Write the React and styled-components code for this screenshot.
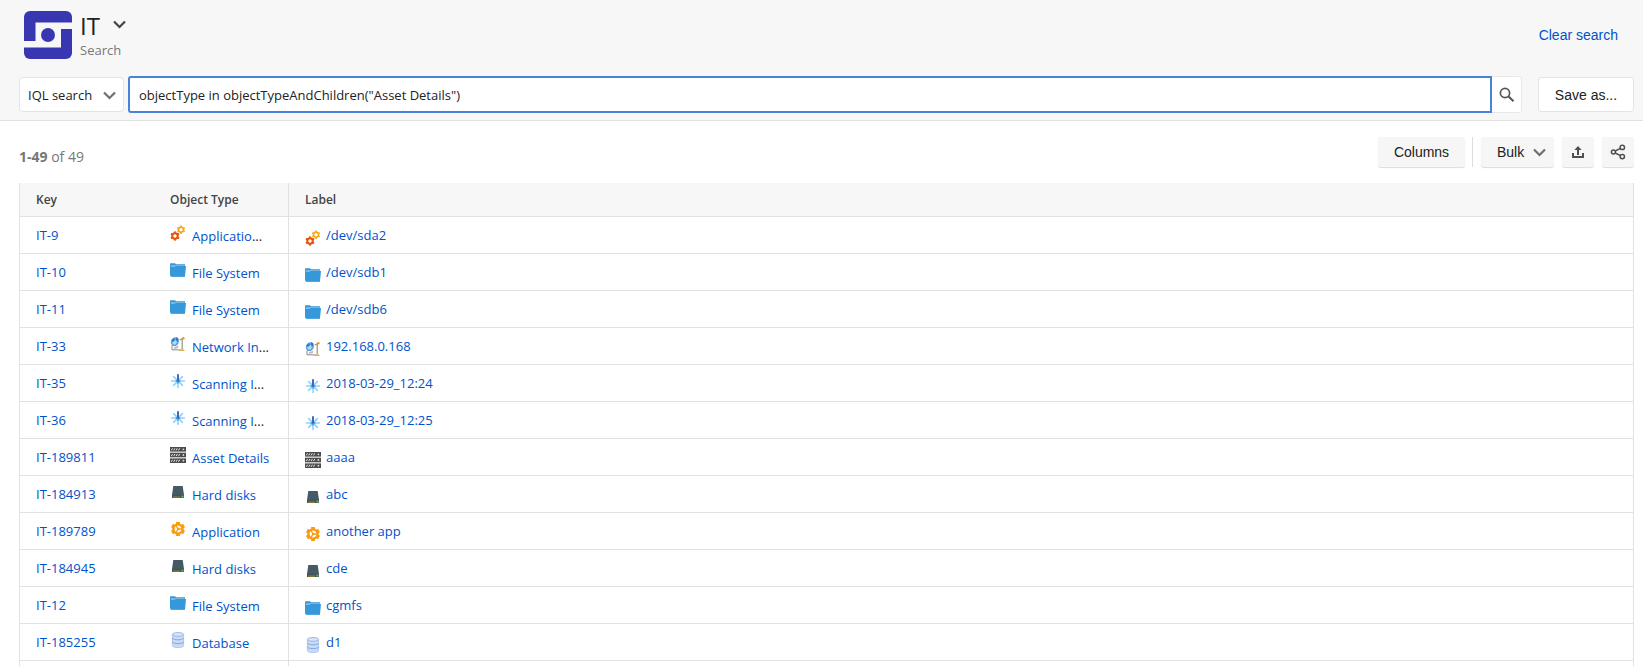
import React, { useState } from "react";
import styled, { createGlobalStyle } from "styled-components";

const rows = [
  { key: "IT-9", type: "Applicatio", cut: true, label: "/dev/sda2", icon: "gears" },
  { key: "IT-10", type: "File System", label: "/dev/sdb1", icon: "folder" },
  { key: "IT-11", type: "File System", label: "/dev/sdb6", icon: "folder" },
  { key: "IT-33", type: "Network In", cut: true, label: "192.168.0.168", icon: "network" },
  { key: "IT-35", type: "Scanning I", cut: true, label: "2018-03-29_12:24", icon: "scan" },
  { key: "IT-36", type: "Scanning I", cut: true, label: "2018-03-29_12:25", icon: "scan" },
  { key: "IT-189811", type: "Asset Details", label: "aaaa", icon: "server" },
  { key: "IT-184913", type: "Hard disks", label: "abc", icon: "disk" },
  { key: "IT-189789", type: "Application", label: "another app", icon: "app" },
  { key: "IT-184945", type: "Hard disks", label: "cde", icon: "disk" },
  { key: "IT-12", type: "File System", label: "cgmfs", icon: "folder" },
  { key: "IT-185255", type: "Database", label: "d1", icon: "database" },
];

const turns = [0, 60, 120, 180, 240, 300];

const drawings = {
  gears: (
    <>
      <g transform="translate(11 4.7)" fill="none" stroke="#f9a51a">
        <circle r="2.5" strokeWidth="1.7" />
        {turns.map((a) => (
          <path key={a} d="M0-3V-4.2" strokeWidth="1.8" transform={`rotate(${a})`} />
        ))}
      </g>
      <g transform="translate(5 11)" fill="none" stroke="#e8540c">
        <circle r="2.7" strokeWidth="2.1" />
        {turns.map((a) => (
          <path key={a} d="M0-3V-4.6" strokeWidth="2.1" transform={`rotate(${a})`} />
        ))}
      </g>
    </>
  ),
  folder: (
    <>
      <path d="M0 1.8Q0 1.2.6 1.2H5L6 2.2H15V10L14.5 14.6H.8L0 13Z" fill="#3a96d4" />
      <path d="M.8 3.3H14.6V5H.8Z" fill="#8cc5ec" />
      <path d="M.2 4.7H4.6L5.6 3.9H16L15 14.2Q14.9 14.8 14.3 14.8H1.6Q1 14.8 .9 14.2Z" fill="#3498db" />
    </>
  ),
  network: (
    <>
      <path d="M2 9.5V13.8H9.5" fill="none" stroke="#8b8b8b" strokeWidth="1" />
      <path d="M3.5 11.5 8.4 9.5 8 12 4.5 13Z" fill="#b9bdc4" />
      <path d="M12.2 2.5V13" stroke="#8f8778" strokeWidth="1.1" />
      <path d="M9.7 3.9 14 2" stroke="#b78a45" strokeWidth="1.1" />
      <circle cx="13.3" cy="2.2" r="1.3" fill="#d99a45" />
      <path d="M8.4 15 10 13.2H13.4L15 15Z" fill="#d5b04d" />
      <ellipse cx="4.9" cy="5.6" rx="3.9" ry="4.6" transform="rotate(28 4.9 5.6)" fill="#5aa6e6" />
      <ellipse cx="4.6" cy="6.2" rx="2.1" ry="2.5" fill="#a6ddfa" />
      <path d="M1.4 4.5 4 2 5 4.2 3 6ZM6.3 1 8.4 2.6 7.8 5.6 6 4Z" fill="#3973ba" />
      <path d="M2.5 9.3 5.5 9.6 7.6 7" fill="none" stroke="#6c8fb5" strokeWidth=".9" />
    </>
  ),
  scan: (
    <>
      <g stroke="#8ed2f7" strokeWidth="1.6" strokeLinecap="round">
        <path d="M1.6 8H14.4" />
        <path d="M3.6 3.6 12.4 12.4" />
        <path d="M12.4 3.6 3.6 12.4" />
        <path d="M8 8V14.4" />
      </g>
      <path d="M8 5.6V10.4M5.8 8H10.2" stroke="#48a2e2" strokeWidth="1.8" />
      <path d="M8 1.2V8.6" stroke="#3a62b8" strokeWidth="1.9" />
    </>
  ),
  server: [0, 5.7, 11.4].map((y) => (
    <g key={y} transform={`translate(0 ${y})`}>
      <rect width="16" height="4.6" fill="#4c4c4c" />
      <path
        d="M1.3 3.4 2.5 1.3M3.7 3.4 4.9 1.3M6.1 3.4 7.3 1.3M8.5 3.4 9.7 1.3"
        stroke="#e8e8e8"
        strokeWidth="1"
      />
      <circle cx="13.4" cy="2.3" r=".9" fill="#dedede" />
    </g>
  )),
  disk: (
    <>
      <path d="M3.3 2H12.7L14 11H2Z" fill="#455a64" />
      <rect x="2" y="10.8" width="12" height="3.2" fill="#40525b" />
      <rect x="3" y="12.5" width="7" height="1.2" fill="#8f8530" />
      <rect x="11.4" y="11.6" width="2.2" height="2" fill="#5cb84e" />
    </>
  ),
  app: (
    <g transform="translate(8 8)" fill="none" stroke="#fb9a0e">
      <circle r="4.6" strokeWidth="2.4" />
      {turns.map((a) => (
        <path key={a} d="M0-5V-7" strokeWidth="3.8" transform={`rotate(${a})`} />
      ))}
      <path d="M0 0-2.2-4M0 0H4.6M0 0-2.2 4" strokeWidth="1.3" />
      <circle r="1.2" fill="#fb9a0e" stroke="none" />
    </g>
  ),
  database: (
    <>
      <path
        d="M2.4 2.4V13.6C2.4 16.2 13.6 16.2 13.6 13.6V2.4"
        fill="#c8daf6"
        stroke="#a3bfe9"
        strokeWidth=".8"
      />
      <ellipse cx="8" cy="2.4" rx="5.6" ry="1.9" fill="#d7e4f9" stroke="#8fafe2" strokeWidth=".8" />
      <path
        d="M2.4 6C2.4 8.4 13.6 8.4 13.6 6M2.4 9.8C2.4 12.2 13.6 12.2 13.6 9.8"
        fill="none"
        stroke="#7fa3de"
        strokeWidth=".9"
      />
    </>
  ),
};

function ObjectIcon({ name }) {
  return (
    <svg width="16" height="16" viewBox="0 0 16 16" aria-hidden="true">
      {drawings[name]}
    </svg>
  );
}

function Chevron({ width = 13, color = "#6f6f6f" }) {
  return (
    <svg width={width} height="9" viewBox="0 0 13 9" aria-hidden="true">
      <path d="M1 1.5 6.5 7 12 1.5" fill="none" stroke={color} strokeWidth="2.2" />
    </svg>
  );
}

function App() {
  const [mode, setMode] = useState("iql");
  const [query, setQuery] = useState('objectType in objectTypeAndChildren("Asset Details")');

  return (
    <Page>
      <GlobalStyle />
      <Header>
        <TitleBar>
          <svg width="48" height="48" viewBox="0 0 48 48" role="img" aria-label="Schema logo">
            <rect width="48" height="48" rx="6" fill="#3936b2" />
            <path d="M11.5 11.5H48V18H37V36.5H0V30H11.5Z" fill="#f7f7f7" />
            <circle cx="24" cy="24" r="7" fill="#3936b2" />
          </svg>
          <Titles>
            <TitleButton type="button">
              <h1>IT</h1>
              <Chevron width={15} color="#444" />
            </TitleButton>
            <p>Search</p>
          </Titles>
          <ClearLink href="#clear">Clear search</ClearLink>
        </TitleBar>
        <SearchBar>
          <SelectBox>
            <select aria-label="Search mode" value={mode} onChange={(e) => setMode(e.target.value)}>
              <option value="iql">IQL search</option>
              <option value="basic">Basic</option>
            </select>
            <Chevron />
          </SelectBox>
          <QueryInput
            type="text"
            aria-label="Query"
            value={query}
            onChange={(e) => setQuery(e.target.value)}
          />
          <SearchButton type="button" aria-label="Run search">
            <svg width="16" height="16" viewBox="0 0 16 16" fill="none" stroke="#555">
              <circle cx="6" cy="6" r="4.6" strokeWidth="1.7" />
              <path d="M9.3 9.3 14.5 14.3" strokeWidth="2" />
            </svg>
          </SearchButton>
          <SaveButton type="button">Save as...</SaveButton>
        </SearchBar>
      </Header>

      <Results>
        <Toolbar>
          <Count>
            <b>1-49</b> of 49
          </Count>
          <ToolButton type="button" $width={87}>Columns</ToolButton>
          <Separator />
          <MenuButton type="button" $width={73}>
            Bulk
            <Chevron />
          </MenuButton>
          <ToolButton type="button" $width={32} aria-label="Export">
            <svg width="16" height="16" viewBox="0 0 16 16" fill="none" stroke="#505050" strokeWidth="2">
              <path d="M3 9V13H13V9" />
              <path d="M8 11V4" />
              <path d="M4.4 6 8 2 11.6 6Z" fill="#505050" stroke="none" />
            </svg>
          </ToolButton>
          <ToolButton type="button" $width={32} aria-label="Share">
            <svg width="16" height="16" viewBox="0 0 16 16" fill="none" stroke="#505050" strokeWidth="1.5">
              <circle cx="3.4" cy="8" r="2" />
              <circle cx="12.3" cy="3.4" r="2.2" />
              <circle cx="12.3" cy="12.6" r="2.2" />
              <path d="M5.2 7 10.4 4.4M5.2 9 10.4 11.6" />
            </svg>
          </ToolButton>
        </Toolbar>

        <Table>
          <colgroup>
            <KeyCol />
            <TypeCol />
            <col />
          </colgroup>
          <thead>
            <tr>
              <HeadCell>Key</HeadCell>
              <HeadCell $divided>Object Type</HeadCell>
              <HeadCell>Label</HeadCell>
            </tr>
          </thead>
          <tbody>
            {rows.map((row) => (
              <tr key={row.key}>
                <Cell>
                  <a href={`#${row.key}`}>{row.key}</a>
                </Cell>
                <Cell $divided>
                  <TypeLine>
                    <ObjectIcon name={row.icon} />
                    <span>
                      <a href={`#type-${row.key}`}>{row.type}</a>
                      {row.cut && "..."}
                    </span>
                  </TypeLine>
                </Cell>
                <Cell>
                  <LabelLine>
                    <ObjectIcon name={row.icon} />
                    <a href={`#${row.key}`}>{row.label}</a>
                  </LabelLine>
                </Cell>
              </tr>
            ))}
            <tr>
              <Cell />
              <Cell $divided />
              <Cell />
            </tr>
          </tbody>
        </Table>
      </Results>
    </Page>
  );
}

const GlobalStyle = createGlobalStyle`
  * {
    box-sizing: border-box;
  }

  body {
    margin: 0;
    background: #fff;
    color: #222;
    font: 13px/20px "Open Sans", "Noto Sans", sans-serif;
  }

  a {
    color: #0052cc;
    text-decoration: none;
  }

  svg {
    display: block;
    flex: none;
  }
`;

const Page = styled.div`
  height: 100vh;
  overflow: hidden;
`;

const Header = styled.header`
  padding: 11px 9px 7px 19px;
  background: #f7f7f7;
  border-bottom: 1px solid #e2e2e2;
`;

const TitleBar = styled.div`
  display: flex;
  align-items: flex-start;
  gap: 8px;
  padding: 0 16px 0 5px;
`;

const Titles = styled.div`
  flex: 1;

  p {
    margin: 0;
    color: #777;
  }
`;

const TitleButton = styled.button`
  display: flex;
  align-items: center;
  gap: 12px;
  height: 29px;
  padding: 0;
  border: 0;
  background: none;
  color: #222;
  cursor: pointer;

  h1 {
    margin: 0;
    font: 400 24px/32px "Open Sans", "Noto Sans", sans-serif;
  }

  svg {
    margin-bottom: 2px;
  }
`;

const ClearLink = styled.a`
  padding-top: 14px;
  font: 14px/20px "Liberation Sans", Arial, sans-serif;
`;

const SearchBar = styled.div`
  display: flex;
  align-items: center;
  margin-top: 16px;
`;

const SelectBox = styled.div`
  position: relative;
  margin-right: 4px;

  select {
    appearance: none;
    display: block;
    width: 105px;
    height: 35px;
    padding: 0 24px 0 8px;
    border: 1px solid #e4e4e4;
    border-radius: 4px;
    background: #fff;
    color: #222;
    font: 13px/20px "Open Sans", "Noto Sans", sans-serif;
  }

  svg {
    position: absolute;
    top: 14px;
    right: 8px;
    pointer-events: none;
  }
`;

const QueryInput = styled.input`
  flex: 1;
  min-width: 0;
  height: 37px;
  padding: 0 9px;
  border: 2px solid #4a82d9;
  border-radius: 3px 0 0 3px;
  outline: 0;
  background: #fff;
  color: #222;
  font: 13px/20px "Open Sans", "Noto Sans", sans-serif;
`;

const SearchButton = styled.button`
  display: flex;
  align-items: center;
  justify-content: center;
  width: 30px;
  height: 37px;
  margin-right: 16px;
  padding: 0;
  border: 1px solid #e8e8ec;
  border-left: 0;
  border-radius: 0 3px 3px 0;
  background: #fff;
`;

const SaveButton = styled.button`
  width: 96px;
  height: 35px;
  padding: 0;
  border: 1px solid #e4e4e4;
  border-radius: 3px;
  background: #fff;
  color: #222;
  font: 14px/20px "Liberation Sans", Arial, sans-serif;
`;

const Results = styled.main`
  padding: 16px 9px 0 19px;
`;

const Toolbar = styled.div`
  display: flex;
  align-items: center;
  gap: 8px;
  height: 30px;
  margin-bottom: 16px;
`;

const Count = styled.div`
  flex: 1;
  padding-top: 10px;
  color: #777;
  font-size: 14px;
`;

const Separator = styled.div`
  width: 1px;
  height: 30px;
  margin-left: -1px;
  background: #ddd;
`;

const ToolButton = styled.button`
  display: flex;
  align-items: center;
  justify-content: center;
  width: ${({ $width }) => $width}px;
  height: 30px;
  padding: 0;
  border: 0;
  border-radius: 3px;
  background: #f6f6f6;
  box-shadow: 0 1px 1px #dcdcdc;
  color: #222;
  font: 14px/20px "Liberation Sans", Arial, sans-serif;
`;

const MenuButton = styled(ToolButton)`
  justify-content: space-between;
  padding: 0 8px 0 16px;
`;

const Table = styled.table`
  width: 100%;
  table-layout: fixed;
  border-collapse: separate;
  border-spacing: 0;
  border: solid #e2e2e2;
  border-width: 0 1px;
`;

const KeyCol = styled.col`
  width: 134px;
`;

const TypeCol = styled.col`
  width: 135px;
`;

const HeadCell = styled.th`
  height: 34px;
  padding: 0 0 0 16px;
  border-bottom: 1px solid #e2e2e2;
  border-right: ${({ $divided }) => ($divided ? "1px solid #e2e2e2" : "0")};
  background: #f7f7f7;
  color: #444;
  font-size: 12px;
  font-weight: 600;
  text-align: left;
`;

const Cell = styled.td`
  height: 37px;
  padding: 0 0 0 16px;
  border-bottom: 1px solid #e2e2e2;
  border-right: ${({ $divided }) => ($divided ? "1px solid #e2e2e2" : "0")};
  white-space: nowrap;
`;

const TypeLine = styled.div`
  display: flex;
  align-items: center;
  gap: 6px;

  svg {
    margin-bottom: 4px;
  }

  span {
    padding-top: 2px;
  }
`;

const LabelLine = styled.div`
  display: flex;
  align-items: center;
  gap: 5px;

  svg {
    margin-top: 6px;
  }
`;

export default App;
